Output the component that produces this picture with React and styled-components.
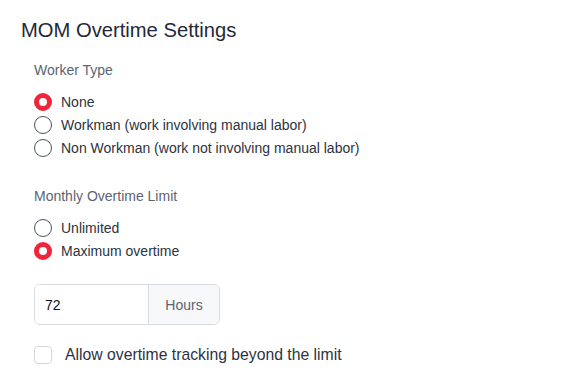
import React, { useState } from "react";
import styled, { createGlobalStyle } from "styled-components";

const Global = createGlobalStyle`
  body {
    margin: 0;
    background: #fff;
    font-family: "Liberation Sans", Arial, sans-serif;
  }
`;

const Page = styled.div`
  padding: 18px 21px 16px 21px;
`;

const Title = styled.h2`
  margin: 0;
  font-size: 20.2px;
  line-height: 24px;
  font-weight: 400;
  color: #1f2937;
`;

const Section = styled.div`
  padding-left: 13px;
  margin-top: ${(p) => p.top || 0}px;
`;

const Label = styled.div`
  font-size: 14px;
  line-height: 20px;
  color: #5b6472;
  margin-bottom: 10px;
`;

const Options = styled.div`
  display: flex;
  flex-direction: column;
`;

const Option = styled.label`
  display: flex;
  align-items: center;
  gap: 9px;
  height: 23px;
  font-size: 14px;
  color: #2d3340;
  cursor: pointer;
`;

const Radio = styled.span`
  box-sizing: border-box;
  width: 18px;
  height: 18px;
  border-radius: 50%;
  flex-shrink: 0;
  background: #fff;
  border: ${(p) => (p.checked ? "5.5px solid #f0243a" : "1.2px solid #4b5160")};
`;

const InputGroup = styled.div`
  display: flex;
  width: 186px;
  height: 41px;
  box-sizing: border-box;
  border: 1px solid #d8dbe0;
  border-radius: 6px;
  overflow: hidden;
  margin-top: 22px;
`;

const Input = styled.input`
  flex: 1;
  min-width: 0;
  border: none;
  outline: none;
  padding: 0 10px;
  font-family: inherit;
  font-size: 14px;
  color: #111;
`;

const Addon = styled.div`
  width: 70px;
  display: flex;
  align-items: center;
  justify-content: center;
  border-left: 1px solid #d8dbe0;
  background: #f7f8fa;
  color: #5b6472;
  font-size: 14px;
`;

const CheckRow = styled.label`
  display: flex;
  align-items: center;
  gap: 13px;
  margin-top: 19px;
  height: 22px;
  font-size: 15.75px;
  color: #2d3340;
`;

const Box = styled.span`
  box-sizing: border-box;
  width: 18px;
  height: 18px;
  border: 1px solid #d3d6dc;
  border-radius: 4px;
  background: #fff;
`;

function RadioList({ items, value, onChange }) {
  return (
    <Options>
      {items.map((it) => (
        <Option key={it} onClick={() => onChange(it)}>
          <Radio checked={value === it} />
          {it}
        </Option>
      ))}
    </Options>
  );
}

export default function App() {
  const [worker, setWorker] = useState("None");
  const [limit, setLimit] = useState("Maximum overtime");
  const [hours, setHours] = useState("72");

  return (
    <Page>
      <Global />
      <Title>MOM Overtime Settings</Title>
      <Section top={18}>
        <Label>Worker Type</Label>
        <RadioList
          items={[
            "None",
            "Workman (work involving manual labor)",
            "Non Workman (work not involving manual labor)",
          ]}
          value={worker}
          onChange={setWorker}
        />
      </Section>
      <Section top={27}>
        <Label>Monthly Overtime Limit</Label>
        <RadioList
          items={["Unlimited", "Maximum overtime"]}
          value={limit}
          onChange={setLimit}
        />
        <InputGroup>
          <Input value={hours} onChange={(e) => setHours(e.target.value)} />
          <Addon>Hours</Addon>
        </InputGroup>
        <CheckRow>
          <Box />
          Allow overtime tracking beyond the limit
        </CheckRow>
      </Section>
    </Page>
  );
}
